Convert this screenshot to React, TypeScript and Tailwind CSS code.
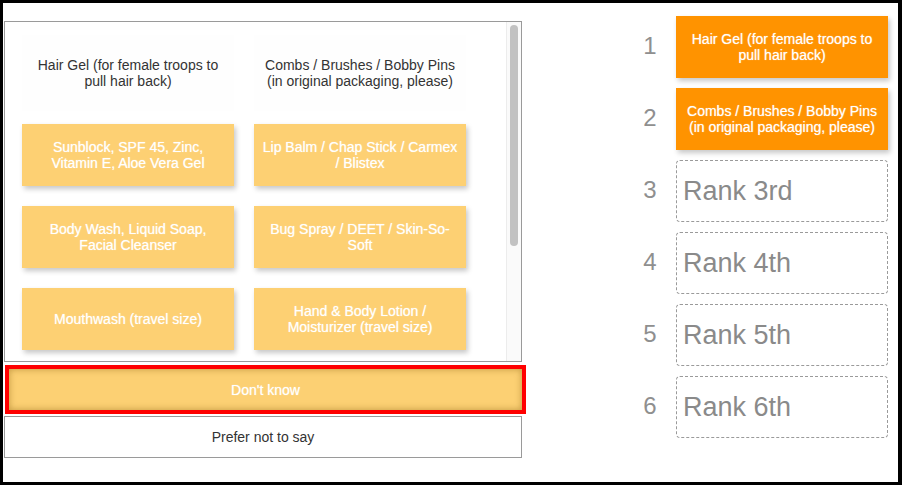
import React from 'react';

const options = [
  'Sunblock, SPF 45, Zinc, Vitamin E, Aloe Vera Gel',
  'Lip Balm / Chap Stick / Carmex / Blistex',
  'Body Wash, Liquid Soap, Facial Cleanser',
  'Bug Spray / DEET / Skin-So-Soft',
  'Mouthwash (travel size)',
  'Hand & Body Lotion / Moisturizer (travel size)',
];

const picked = [
  'Hair Gel (for female troops to pull hair back)',
  'Combs / Brushes / Bobby Pins (in original packaging, please)',
];

const ranks = ['Rank 3rd', 'Rank 4th', 'Rank 5th', 'Rank 6th'];

export default function App() {
  return (
    <div
      className="w-[902px] h-[485px] border-[3px] border-r-4 border-black bg-white flex overflow-hidden"
      style={{ fontFamily: '"Liberation Sans", Arial, sans-serif' }}
    >
      {/* left: option pool */}
      <div className="w-[523px] shrink-0">
        <div className="mt-[18px] ml-px w-[518px] h-[341px] border border-[#9a9a9a] relative overflow-hidden">
          <div className="pl-[17px] pt-[13px]">
            <div className="grid grid-cols-[212px_212px] gap-x-5 mb-[13px]">
              {picked.map((p) => (
                <div
                  key={p}
                  className="h-[76px] flex items-center justify-center text-center px-2 text-[14px] leading-4 text-[#333] bg-[#fefefe]"
                >
                  {p}
                </div>
              ))}
            </div>
            <div className="grid grid-cols-[212px_212px] gap-5">
              {options.map((o) => (
                <div
                  key={o}
                  className="h-[62px] flex items-center justify-center text-center px-2 text-[14px] leading-4 text-white bg-[#fdd073] shadow-[2px_3px_5px_rgba(0,0,0,0.22)] [text-shadow:0_0_1px_rgba(255,255,255,0.7)]"
                >
                  {o}
                </div>
              ))}
            </div>
          </div>
          {/* scrollbar */}
          <div className="absolute top-0 right-0 bottom-0 w-[15px] bg-[#fafafa] border-l border-[#ececec]">
            <div className="absolute top-[3px] left-[3px] w-[8px] h-[221px] rounded-full bg-[#c2c2c2]" />
          </div>
        </div>

        <div className="mt-[3px] ml-[2px] w-[521px] h-[49px] border-4 border-[#ff0000]">
          <div className="h-full flex items-center justify-center pt-[2px] bg-[#fcd073] shadow-[inset_0_0_7px_rgba(120,80,0,0.45)] text-white text-[14px] [text-shadow:0_0_1px_rgba(255,255,255,0.7)]">
            Don't know
          </div>
        </div>

        <div className="mt-[2px] ml-px w-[518px] h-[42px] border border-[#9a9a9a] flex items-center justify-center text-[14px] text-[#333]">
          Prefer not to say
        </div>
      </div>

      {/* right: ranking */}
      <div className="ml-[110px] pt-[13px] flex flex-col gap-[10px]">
        {picked.map((p, i) => (
          <div key={p} className="flex items-center">
            <div className="w-[28px] text-center text-[24px] leading-6 -mt-[3px] text-[#8f8f8f]">{i + 1}</div>
            <div className="ml-[12px] w-[212px] h-[62px] flex items-center justify-center text-center px-2 text-[14px] leading-4 text-white bg-[#ff9300] shadow-[2px_3px_5px_rgba(0,0,0,0.22)] [text-shadow:0_0_1px_rgba(255,255,255,0.7)]">
              {p}
            </div>
          </div>
        ))}
        {ranks.map((r, i) => (
          <div key={r} className="flex items-center">
            <div className="w-[28px] text-center text-[24px] leading-6 -mt-[3px] text-[#8f8f8f]">{i + 3}</div>
            <div className="ml-[12px] w-[212px] h-[62px] flex items-center pl-[6px] border border-dashed border-[#9a9a9a] rounded-[4px] text-[27px] text-[#8a8a8a]">
              {r}
            </div>
          </div>
        ))}
      </div>
    </div>
  );
}
